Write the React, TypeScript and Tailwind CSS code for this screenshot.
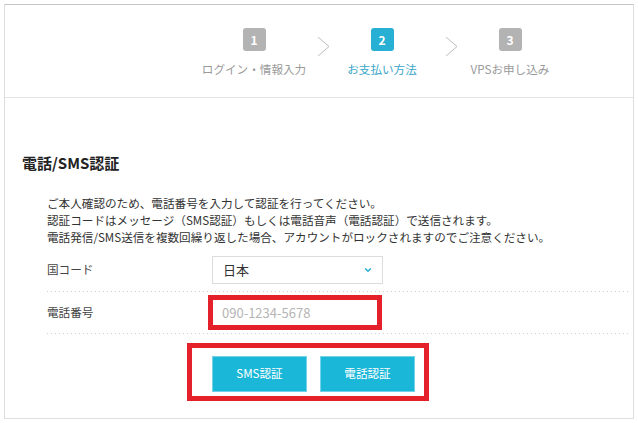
import { ChevronDown } from 'lucide-react';

const STEPS = [
  { no: 1, label: 'ログイン・情報入力', active: false },
  { no: 2, label: 'お支払い方法', active: true },
  { no: 3, label: 'VPSお申し込み', active: false },
];

function StepChevron() {
  return (
    <div className="w-[28px] flex justify-end pr-[2px] pt-[8px]">
      <svg width="13" height="21" viewBox="0 0 13 21" fill="none">
        <path d="M1 1 L12 10.5 L1 20" stroke="#bdbdbd" strokeWidth="1" />
      </svg>
    </div>
  );
}

function Steps() {
  return (
    <div className="flex items-start pl-[199px] pt-[23px]">
      {STEPS.map((step, i) => (
        <div key={step.no} className="flex items-start">
          {i > 0 && <StepChevron />}
          <div className="w-[100px] flex flex-col items-center">
            <div
              className={
                step.active
                  ? 'w-[23px] h-[23px] rounded-[3px] bg-[#27afd4] text-white text-[12px] font-bold flex items-center justify-center'
                  : 'w-[23px] h-[23px] rounded-[3px] bg-[#b3b3b3] text-white text-[12px] font-bold flex items-center justify-center'
              }
            >
              {step.no}
            </div>
            <div
              className={
                step.active
                  ? 'mt-[10px] text-[11.6px] leading-[16px] whitespace-nowrap text-[#3aa6c9]'
                  : 'mt-[10px] text-[11.6px] leading-[16px] whitespace-nowrap text-[#9a9a9a]'
              }
            >
              {step.label}
            </div>
          </div>
        </div>
      ))}
    </div>
  );
}

function DottedLine() {
  return (
    <div className="h-px ml-[42px] mr-[2px] bg-[linear-gradient(to_right,#cfcfcf_1px,transparent_1px)] bg-[length:4px_1px]" />
  );
}

export default function App() {
  return (
    <div
      className="w-[638px] h-[423px] bg-white text-[#333]"
      style={{ fontFamily: '"Noto Sans CJK JP", "Noto Sans", sans-serif' }}
    >
      <div className="ml-[4px] pt-[4px]">
        <div className="w-[630px] h-[415px] border border-[#dedede] border-t-[#c4c4c4] overflow-hidden">
          {/* Header / steps */}
          <div className="h-[93px] border-b border-[#e3e3e3]">
            <Steps />
          </div>

          {/* Body */}
          <div className="pt-[54px]">
            <h2 className="ml-[17px] text-[15px] font-bold leading-[22px] text-[#222]">電話/SMS認証</h2>

            <div className="ml-[42px] mt-[21px] text-[11.6px] leading-[17px] text-[#333]">
              <p>ご本人確認のため、電話番号を入力して認証を行ってください。</p>
              <p>認証コードはメッセージ（SMS認証）もしくは電話音声（電話認証）で送信されます。</p>
              <p>電話発信/SMS送信を複数回繰り返した場合、アカウントがロックされますのでご注意ください。</p>
            </div>

            {/* Country code */}
            <div className="flex items-center ml-[42px] mt-[10px] pb-[7px]">
              <div className="w-[161px] text-[11.6px] text-[#444]">国コード</div>
              <div className="ml-[4px] w-[171px] h-[28px] border border-[#dcdcdc] flex items-center justify-between pl-[10px] pr-[9px]">
                <span className="text-[13px] text-[#333]">日本</span>
                <ChevronDown size={10} strokeWidth={3.5} className="text-[#2cb0d6]" />
              </div>
            </div>
            <DottedLine />

            {/* Phone number */}
            <div className="flex items-center ml-[42px] py-[3px]">
              <div className="w-[161px] text-[11.6px] text-[#444]">電話番号</div>
              <div className="w-[174px] h-[35px] border-[5px] border-[#e4202b] flex items-center pl-[9px]">
                <input
                  className="w-full outline-none text-[13px] text-[#333] placeholder:text-[#b5b5b5] bg-transparent"
                  placeholder="090-1234-5678"
                />
              </div>
            </div>
            <DottedLine />

            {/* Buttons */}
            <div className="ml-[182px] mt-[9px] w-[242px] h-[58px] border-[5px] border-[#e4202b] flex items-start pl-[20px] pt-[8px] gap-[13px]">
              <button className="w-[95px] h-[36px] bg-[#1bb7d8] border border-[#74d3e7] text-white text-[11.6px]">
                SMS認証
              </button>
              <button className="w-[95px] h-[36px] bg-[#1bb7d8] border border-[#74d3e7] text-white text-[11.6px]">
                電話認証
              </button>
            </div>
          </div>
        </div>
      </div>
    </div>
  );
}
